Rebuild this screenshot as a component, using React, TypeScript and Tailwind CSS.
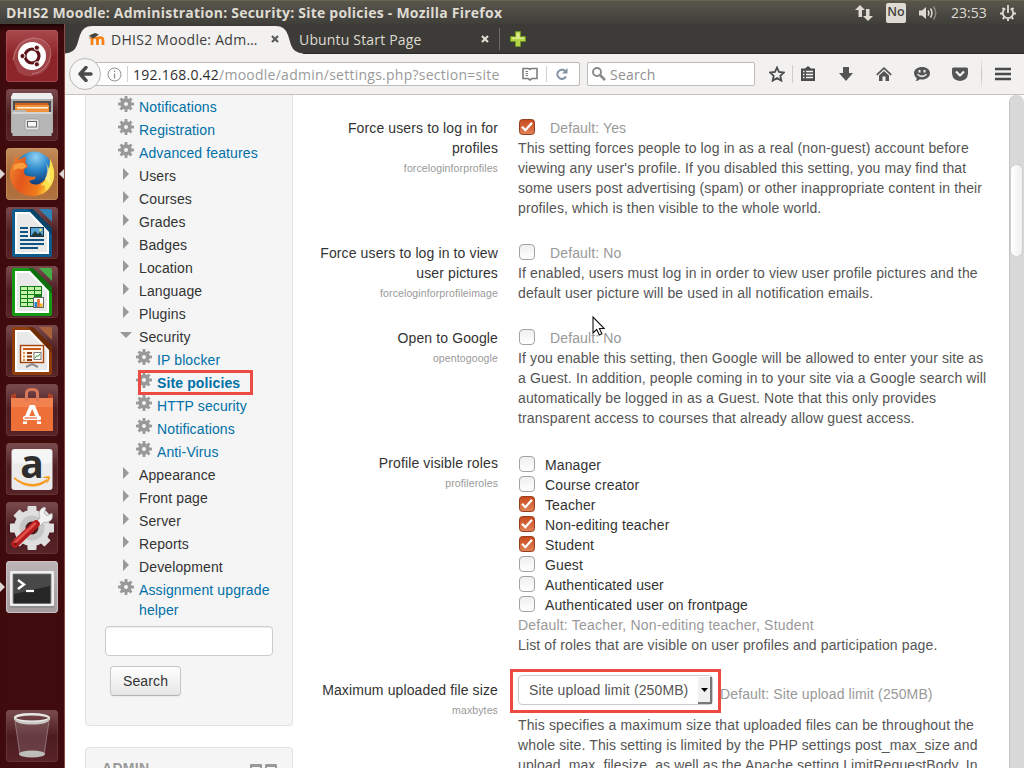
import React from 'react';

const UI = "font-['Open_Sans','Noto_Sans',sans-serif]";

function Cog() {
  return (
    <svg className="h-4 w-4" viewBox="0 0 16 16">
      <g fill="#999">
        <circle cx="8" cy="8" r="5.8" />
        <g>
          <rect x="6.6" y="0" width="2.8" height="16" />
          <rect x="0" y="6.6" width="16" height="2.8" />
          <rect x="6.6" y="0.2" width="2.8" height="15.6" transform="rotate(45 8 8)" />
          <rect x="6.6" y="0.2" width="2.8" height="15.6" transform="rotate(-45 8 8)" />
        </g>
      </g>
      <circle cx="8" cy="8" r="2" fill="#f5f5f5" />
    </svg>
  );
}

function TileBox({ tone, children }: { tone: string; children: React.ReactNode }) {
  return (
    <div className={`h-[52px] w-[52px] shrink-0 rounded-[4px] ${tone}`}>
      <svg viewBox="0 0 52 52" className="h-full w-full overflow-visible">{children}</svg>
    </div>
  );
}

const DARK = 'bg-linear-to-b from-[#7a4c50] via-[#4c1c20] to-[#572428] shadow-[inset_0_0_0_1px_#74454980]';

function DocShape({ c, d, l }: { c: string; d: string; l: string }) {
  return (
    <>
      <path d="M6 4q0-2 2-2H26L46 22V48q0 2-2 2H8q-2 0-2-2Z" fill={c} />
      <path d="M27 2L46 21V28L22 2Z" fill={d} />
      <path d="M9 5H24L43 25V47H9Z" fill="#fff" />
      <path d="M11 7H23L41 26V45H11Z" fill="#e9e9e9" />
      <path d="M33 2H44q2 0 2 2V15Z" fill={l} />
    </>
  );
}

function Launcher() {
  return (
    <div className="relative flex w-[65px] shrink-0 flex-col items-center gap-[7px] border-r border-[#8d4b45] bg-[#400b0d] pt-[6px] pr-0 shadow-[inset_0_8px_6px_-5px_#1c0304]">
      <TileBox tone="bg-linear-to-b from-[#a9494d] via-[#8c2329] to-[#8d262b] shadow-[inset_0_0_0_1px_#b5646680]">
        <path d="M7 30Q10 10 28 8Q44 9 45 24Q42 42 26 44" fill="none" stroke="#c88385" strokeWidth="1" opacity=".8" />
        <path d="M7 30Q8 9 27 7Q42 8 45 27Q44 38 36 43Q24 50 12 42Z" fill="#c4797b" opacity=".35" />
        <circle cx="26" cy="26" r="14" fill="#fff" />
        <circle cx="26" cy="26" r="7" fill="none" stroke="#5d1519" strokeWidth="3.2" />
        <circle cx="16.500" cy="26" r="2.6" fill="#5d1519" stroke="#fff" strokeWidth="1" />
        <circle cx="30.800" cy="17.700" r="2.6" fill="#5d1519" stroke="#fff" strokeWidth="1" />
        <circle cx="30.800" cy="34.300" r="2.6" fill="#5d1519" stroke="#fff" strokeWidth="1" />
      </TileBox>
      <TileBox tone={DARK}>
        <path d="M5 8L7 4H45L47 8V44H5Z" fill="#b0b0b0" />
        <path d="M5 8L7 4H45L47 8V10H5Z" fill="#ededed" />
        <rect x="7" y="12" width="38" height="12" fill="#4e4e4e" />
        <path d="M9 14H42V24H9Z" fill="#c9621f" />
        <path d="M9 16H43V24H9Z" fill="#f0913a" />
        <path d="M11 18H42V19.500H11Z" fill="#fff3df" />
        <path d="M6.500 21H19L21 23H45.500V47H6.500Z" fill="#b6b6b6" />
        <path d="M6.500 23H45.500V25H6.500Z" fill="#d4d4d4" />
        <rect x="19" y="30" width="14" height="11" rx="2" fill="#e2e2e2" stroke="#8e8e8e" strokeWidth=".6" />
        <rect x="21.500" y="32.500" width="9" height="5.500" fill="#f6f6f6" stroke="#666" />
      </TileBox>
      <TileBox tone="bg-linear-to-b from-[#c58d5b] via-[#ab6936] to-[#b17241] shadow-[inset_0_0_0_1px_#cf9d7180]">
        <defs>
          <radialGradient id="globe" cx=".55" cy=".15" r=".8"><stop offset="0" stopColor="#8fd3f5" /><stop offset=".45" stopColor="#2b86c8" /><stop offset="1" stopColor="#0b2f6b" /></radialGradient>
          <linearGradient id="fox" x1="0" y1="0" x2="1" y2=".3"><stop offset="0" stopColor="#f08a2c" /><stop offset=".4" stopColor="#e4561d" /><stop offset=".8" stopColor="#f07a1c" /><stop offset="1" stopColor="#fbc53a" /></linearGradient>
        </defs>
        <circle cx="28" cy="22" r="18.500" fill="url(#globe)" />
        <path d="M9 8.500L13 11.500Q17 9 20 9L19.500 14L22 18.500L18.500 21Q17 25 20 27.500Q24 29 29 28.500Q30.500 30 28 31.500L23 33Q26 38 33 36Q40 33 42 24L44 17Q49 24 47.500 31Q44 47 27 48Q8 47 4 30Q3 20 8.500 13.500Z" fill="url(#fox)" />
        <path d="M44 11Q50 22 47.500 32Q45 39 39 43Q40 38 38 37L34 38Q41 32 42 24Q44 19 44 11Z" fill="#fde24f" />
        <path d="M40 15Q43 22 39 31L45 36Q43 29 44 22Z" fill="#fff3a0" opacity=".7" />
        <path d="M8 17Q13 14 18 15L21 18.500L16 21.500Q12 19 7 23Z" fill="#f89c3c" />
      </TileBox>
      <TileBox tone={DARK}>
        <DocShape c="#0e5c8c" d="#0a4469" l="#2e83b4" />
        <path d="M14 21H22M14 25H22M14 29H22M14 33H38M14 37H38M14 41H32" stroke="#0e5584" strokeWidth="1.900" />
        <rect x="24.500" y="20.500" width="13" height="9" fill="#58a6d6" stroke="#18364b" />
        <path d="M25 29L29 24L32 27L34 25L37 29Z" fill="#223b3b" /><circle cx="34.500" cy="23" r="1.200" fill="#ffe45b" />
      </TileBox>
      <TileBox tone={DARK}>
        <DocShape c="#149a14" d="#0b6d0b" l="#47ad47" />
        <rect x="14" y="20" width="22" height="21" fill="#157d15" />
        <g fill="#c4f3ae">
          <path d="M15 21h6v3h-6zM22 21h6v3h-6zM29 21h6v3h-6zM15 25h6v3h-6zM22 25h6v3h-6zM29 25h6v3h-6zM15 29h6v3h-6zM22 29h6v3h-6zM15 33h6v3h-6zM22 33h6v3h-6zM15 37h6v3h-6zM22 37h6v3h-6z" />
        </g>
        <rect x="27.500" y="31.500" width="10" height="10" fill="#fff" stroke="#666" />
        <path d="M28.500 36h2.500v5h-2.500z" fill="#1c86c6" /><path d="M31.200 33h2.600v8h-2.600z" fill="#e4682c" /><path d="M34 37.500h2.600v3.500h-2.600z" fill="#f0b51d" />
      </TileBox>
      <TileBox tone={DARK}>
        <DocShape c="#8f3d0b" d="#6b2c05" l="#a8633b" />
        <rect x="14.500" y="20.500" width="23" height="17" fill="#fff6ec" stroke="#a3430d" strokeWidth="1.400" />
        <path d="M17 24H35" stroke="#cc5a1c" strokeWidth="2" />
        <path d="M17 28H19M17 31.500H19M17 35H19" stroke="#e98c50" strokeWidth="2" /><path d="M21 28H26M21 31.500H26M21 35H26" stroke="#8b3a0c" strokeWidth="2" />
        <rect x="28" y="27.500" width="7" height="7" fill="#fff" stroke="#777" /><path d="M29 33L31 30.500L32 31.500L34 29" stroke="#2a9a2f" fill="none" />
        <path d="M20 42L26 39L32 42" stroke="#8a8a8a" strokeWidth="2" fill="none" />
      </TileBox>
      <TileBox tone={DARK}>
        <path d="M5 11L10 9V14H42V9L47 11V16H5Z" fill="#ac4326" />
        <rect x="5" y="14" width="42" height="33" fill="#ee7039" />
        <rect x="5" y="14" width="42" height="9" fill="#f48f60" opacity=".55" />
        <path d="M20.500 17V9Q20.500 5.500 26 5.500Q31.500 5.500 31.500 9V17" fill="none" stroke="#d8765b" strokeWidth="3" />
        <path d="M19.500 36L25 23H27.500L33 36" fill="none" stroke="#fff" strokeWidth="3.800" />
        <rect x="17" y="32" width="18" height="4" rx="1.500" fill="#fff" /><path d="M18.500 34H31" stroke="#e96833" strokeWidth="1.200" />
        <path d="M17 37.500h4v2.500h-4zM31 37.500h4v2.500h-4z" fill="#fff" />
      </TileBox>
      <TileBox tone={DARK}>
        <rect x="5.500" y="6" width="41" height="41" rx="3" fill="#ebebeb" />
        <rect x="6.500" y="6.500" width="39" height="14" rx="3" fill="#fff" opacity=".5" />
        <text x="26" y="34.500" textAnchor="middle" fontSize="39" fontWeight="700" fill="#2e2e2e" fontFamily="Open Sans">a</text>
        <path d="M8 34Q25 47 41 36L42 38Q25 50 8 36Z" fill="#f79a1c" />
        <path d="M36 34.500Q41 32.500 44 33.500Q44 37 41 41Q41.500 38 42 35.500Q39 35 36 34.500Z" fill="#f79a1c" />
      </TileBox>
      <TileBox tone={DARK}>
        <g fill="#dfdfdf"><circle cx="26" cy="26" r="18" />
          <rect x="21.500" y="4" width="9" height="44" rx="1" /><rect x="4" y="21.500" width="44" height="9" rx="1" />
          <rect x="21.500" y="4" width="9" height="44" rx="1" transform="rotate(45 26 26)" /><rect x="21.500" y="4" width="9" height="44" rx="1" transform="rotate(-45 26 26)" /></g>
        <circle cx="26" cy="26" r="12.500" fill="#c6c6c6" /><circle cx="26" cy="26" r="6.500" fill="#4b1b1f" />
        <path d="M29 21L34 16Q31 8 38 5L40 6L38 11L41 14L46 11Q48 18 42 20Q39 21 38 20L33 25Z" fill="#f2f2f2" stroke="#999" strokeWidth=".6" />
        <path d="M9 42L30 22" stroke="#b61c1f" strokeWidth="7.500" strokeLinecap="round" />
        <path d="M9 40.500L29 21.500" stroke="#e4504b" strokeWidth="2.500" strokeLinecap="round" />
        <circle cx="9.500" cy="42" r="1.500" fill="#7b1414" />
      </TileBox>
      <TileBox tone="bg-linear-to-b from-[#bdb4b7] to-[#a39a9e] shadow-[inset_0_0_0_1px_#c9c1c4]">
        <rect x="4" y="10" width="44" height="37" rx="1" fill="#8d8d8d" />
        <rect x="4" y="10" width="44" height="35" rx="1" fill="#efefef" />
        <rect x="6.500" y="12.500" width="39" height="30" fill="#8f8f8f" />
        <rect x="7.500" y="13.500" width="37" height="29" fill="#262626" />
        <path d="M8 14H44V25L8 33Z" fill="#484848" />
        <path d="M12 19L18 23.500L12 28" fill="none" stroke="#fff" strokeWidth="2.400" /><path d="M20 30H28" stroke="#fff" strokeWidth="2.200" />
      </TileBox>
      <div className="mt-[90px]">
        <TileBox tone={DARK}>
          <path d="M9 10L14 46H38L43 10Z" fill="#a98f92" opacity=".28" />
          <path d="M9 11L14 45M43 11L38 45" stroke="#b7a3a5" strokeWidth=".8" opacity=".7" />
          <ellipse cx="26" cy="44" rx="13" ry="3.500" fill="#bdbdba" />
          <ellipse cx="26" cy="8" rx="17" ry="3.800" fill="none" stroke="#e6e6e3" strokeWidth="2.400" />
          <path d="M8 9Q10 14.500 26 14.500Q42 14.500 44 9V7Q42 12 26 12Q10 12 8 7Z" fill="#c8c8c4" />
        </TileBox>
      </div>
      <svg className="absolute top-[144px] left-0 h-3 w-[5px]" viewBox="0 0 5 12"><path d="M0 1L5 6L0 11Z" fill="#ddd4d4" /></svg>
      <svg className="absolute top-[144px] right-0 h-3 w-[5px]" viewBox="0 0 5 12"><path d="M5 1L0 6L5 11Z" fill="#ddd4d4" /></svg>
      <svg className="absolute top-[557px] left-0 h-3 w-[5px]" viewBox="0 0 5 12"><path d="M0 1L5 6L0 11Z" fill="#ddd4d4" /></svg>
    </div>
  );
}

function MenuBar() {
  return (
    <header className={`flex h-6 shrink-0 items-center border-t border-[#66634f] bg-linear-to-b from-[#59564d] to-[#3f3e39] pr-2 pl-[6px] ${UI}`}>
      <div className="text-[14px] leading-[22px] font-bold tracking-[0.23px] whitespace-nowrap text-[#dfdbd2]">DHIS2 Moodle: Administration: Security: Site policies - Mozilla Firefox</div>
      <div className="ml-auto flex items-center">
        <svg className="h-[18px] w-[18px]" viewBox="0 0 18 18" fill="#dfdbd2"><path d="M5 1L10 6H7V13H3.500V6H0ZM13 17L8 12H11V5H14.500V12H18Z" /></svg>
        <div className="ml-[13px] flex h-5 w-5 items-center justify-center rounded-[2px] bg-[#dfdbd2] text-[12.500px] font-semibold text-[#45433e]">No</div>
        <svg className="ml-[12px] h-[18px] w-5" viewBox="0 0 20 18" fill="none" stroke="#dfdbd2" strokeWidth="1.500"><path d="M1 6.500H4L8 3V15L4 11.500H1Z" fill="#dfdbd2" stroke="none" /><path d="M10 6.500Q11.800 9 10 11.500M12.500 4.500Q15.500 9 12.500 13.500" /><path d="M15.500 2.500Q20 9 15.500 15.500" stroke="#8b887f" /></svg>
        <div className="ml-[13px] w-[37px] text-[14px] leading-[22px] text-[#dfdbd2]">23:53</div>
        <svg className="ml-[12px] h-4 w-4" viewBox="0 0 16 16" fill="none" stroke="#dfdbd2"><path d="M5.300 3.500A5.200 5.200 0 1 0 10.700 3.500" strokeWidth="1.800" /><path d="M8 0V8" strokeWidth="1.800" /><path d="M0 8.500H2.500M13.500 8.500H16M8 14V16M2.500 3L4 4.500M13.500 3L12 4.500M2.800 14L4.200 12.400M13.200 14L11.800 12.400" strokeWidth="2" /></svg>
      </div>
    </header>
  );
}

function CloseX({ c }: { c: string }) {
  return <svg className="h-2 w-2" viewBox="0 0 8 8"><path d="M1 1L7 7M7 1L1 7" stroke={c} strokeWidth="2.200" /></svg>;
}

function Tabs() {
  return (
    <div className={`relative flex h-[30px] shrink-0 items-center border-b border-[#2b2a27] bg-[#3c3b37] pt-px text-[14px] ${UI}`}>
      <svg className="absolute top-0 left-0 h-[30px] w-[240px]" viewBox="0 0 240 30"><path d="M0 30V29.500Q9 29 12 21L15 11Q18 2 27 2H211Q220 2 223 11L226 21Q229 29 238 29.500V30Z" fill="#f2f1f0" /></svg>
      <div className="relative flex items-center pl-[24px]">
        <svg className="h-4 w-4" viewBox="0 0 16 16"><path d="M3 6V14M3 14V9Q3 6.500 5.700 6.500Q8.500 6.500 8.500 9.500V14M8.500 14V9.500Q8.500 6.500 11.300 6.500Q14 6.500 14 9.500V14" fill="none" stroke="#f98012" strokeWidth="2.700" /><path d="M0 4.500L6 2L10 3.500L4 7.500Z" fill="#444" /><path d="M1 5V8" stroke="#9a7c66" /></svg>
        <span className="ml-[6px] w-[153px] tracking-[0.27px] whitespace-nowrap text-[#3c3c3c]">DHIS2 Moodle: Adm…</span>
        <span className="ml-[7px]"><CloseX c="#5b5b5b" /></span>
      </div>
      <span className="relative ml-[20px] w-[140px] tracking-[0.17px] whitespace-nowrap text-[#dfdbd2]">Ubuntu Start Page</span>
      <span className="ml-[42px]"><CloseX c="#dfdbd2" /></span>
      <span className="ml-[10px] h-[22px] w-px bg-[#6c6b67]" />
      <svg className="ml-[10px] h-4 w-4" viewBox="0 0 16 16"><path d="M5.500 .5H10.500V5.500H15.500V10.500H10.500V15.500H5.500V10.500H.5V5.500H5.500Z" fill="#b4d445" stroke="#6c9423" /><path d="M6.500 2H9.500V6.500H14V8H2V6.500H6.500Z" fill="#dbe98b" /></svg>
    </div>
  );
}

function NavBar() {
  return (
    <div className={`flex h-[41px] shrink-0 items-center border-b border-[#c4c2bf] bg-[#f2f1f0] text-[14px] ${UI}`}>
      <div className="relative z-10 ml-1 flex h-8 w-8 shrink-0 items-center justify-center rounded-full border border-[#b9b7b4] bg-[#f8f7f7]">
        <svg className="h-4 w-4" viewBox="0 0 16 16"><path d="M9 1.500L3 8L9 14.500M3 8H14" fill="none" stroke="#4b4b4b" strokeWidth="3.400" strokeLinejoin="round" strokeLinecap="round" /></svg>
      </div>
      <div className="-ml-[6px] flex h-6 w-[485px] shrink-0 items-center rounded-r-[2px] border border-[#bdbbb8] bg-white">
        <svg className="ml-[11px] h-[15px] w-[15px]" viewBox="0 0 15 15"><circle cx="7.500" cy="7.500" r="6.500" fill="none" stroke="#8f8f8f" /><path d="M7.500 3.500V5M7.500 6.500V11.500" stroke="#8f8f8f" strokeWidth="1.300" /></svg>
        <span className="ml-[5px] h-4 w-px bg-[#d3d3d3]" />
        <div className="ml-[5px] w-[375px] overflow-hidden tracking-[0.25px] whitespace-nowrap text-[#9a9a9a]"><span className="text-[#2f2f2f]">192.168.0.42</span>/moodle/admin/settings.php?section=site</div>
        <svg className="ml-[14px] h-[14px] w-4" viewBox="0 0 16 14" fill="none" stroke="#7e7e7e" strokeWidth="1.600"><path d="M1 1.500H6Q8 1.500 8 3Q8 1.500 10 1.500H15V11.500H10L8 13L6 11.500H1Z" /><path d="M3.500 4.500H6M3.500 6.500H6M3.500 8.500H6" strokeWidth="1" /></svg>
        <span className="ml-2 h-4 w-px bg-[#d3d3d3]" />
        <svg className="ml-[9px] h-3 w-3" viewBox="0 0 12 12"><path d="M10 8.500A4.600 4.600 0 1 1 9 2.800" fill="none" stroke="#8392a5" strokeWidth="2" /><path d="M11.500 0V5.500H6Z" fill="#8392a5" /></svg>
      </div>
      <div className="ml-[7px] flex h-6 w-[168px] shrink-0 items-center rounded-[2px] border border-[#bdbbb8] bg-white">
        <svg className="ml-[4px] h-[14px] w-[14px]" viewBox="0 0 14 14"><circle cx="5" cy="5" r="4" fill="none" stroke="#8a8a8a" strokeWidth="1.900" /><path d="M8 8L13 13" stroke="#8a8a8a" strokeWidth="2.600" /></svg>
        <span className="ml-[4px] tracking-[0.2px] text-[#8f8f8f]">Search</span>
      </div>
      <svg className="ml-[14px] h-4 w-4" viewBox="0 0 16 16"><path d="M8 1.500L10 6L15 6.500L11.300 9.800L12.300 14.600L8 12.100L3.700 14.600L4.700 9.800L1 6.500L6 6Z" fill="none" stroke="#4c4c4c" strokeWidth="1.800" /></svg>
      <span className="ml-[7px] h-[18px] w-px bg-[#cfcdca]" />
      <svg className="ml-[7px] h-4 w-4" viewBox="0 0 16 16"><path d="M1 2.500H5L8 0L11 2.500H15V15H1Z" fill="#4c4c4c" /><path d="M3 5.500H4.500M6 5.500H13M3 8.500H4.500M6 8.500H13M3 11.500H4.500M6 11.500H13" stroke="#f2f1f0" strokeWidth="1.700" /></svg>
      <svg className="ml-[22px] h-4 w-4" viewBox="0 0 16 16"><path d="M5 1H11V7H15L8 15L1 7H5Z" fill="#545454" /></svg>
      <svg className="ml-[22px] h-4 w-4" viewBox="0 0 16 16" fill="#545454"><path d="M8 1L15.800 8.300L14.600 9.400L8 3.300L1.400 9.400L.2 8.300Z" /><path d="M3 9.500L8 5L13 9.500V15H9.500V10.500H6.500V15H3Z" /></svg>
      <svg className="ml-[22px] h-4 w-4" viewBox="0 0 16 16"><path d="M8 1C12.500 1 16 3.500 16 7.200S12.500 13.500 8 13.500Q6.800 13.500 6 13.300Q4 15.200 1.500 15Q3 13.800 2.600 12Q0 10 0 7.200C0 3.500 3.500 1 8 1Z" fill="#545454" /><path d="M5.500 4V6.500M10.500 4V6.500" stroke="#f2f1f0" strokeWidth="2" /><path d="M3.500 8.300Q8 12.500 12.500 8.300" fill="none" stroke="#f2f1f0" strokeWidth="1.500" /></svg>
      <svg className="ml-[22px] h-4 w-4" viewBox="0 0 16 16"><path d="M1.500 1.500H14.500Q16 1.500 16 3V7.500Q15.500 14.500 8 15Q.5 14.500 0 7.500V3Q0 1.500 1.500 1.500Z" fill="#545454" /><path d="M4 5.500L8 9.500L12 5.500" fill="none" stroke="#f2f1f0" strokeWidth="2.200" /></svg>
      <span className="ml-[13px] h-[34px] w-px bg-linear-to-b from-[#f2f1f0] via-[#c4c2bf] to-[#f2f1f0]" />
      <svg className="ml-[13px] h-[14px] w-4" viewBox="0 0 16 14"><path d="M0 2H16M0 7H16M0 12H16" stroke="#4a4a4a" strokeWidth="2.600" /></svg>
    </div>
  );
}

function Leaf({ children, indent, bold }: { children: React.ReactNode; indent?: boolean; bold?: boolean }) {
  return (
    <li className={`relative flex min-h-[23px] items-start pb-[3px] ${indent ? 'pl-[18px]' : ''}`}>
      <span className="-mt-px mr-[5px] shrink-0"><Cog /></span>
      <a className={`w-[136px] shrink-0 leading-5 text-[#0070a8] ${bold ? 'font-bold' : ''}`}>{children}</a>
      {bold && <span className="absolute -top-[3px] left-[20px] h-[25px] w-[115px] border-[3px] border-[#ec4a43]" />}
    </li>
  );
}

function Branch({ children, open }: { children: React.ReactNode; open?: boolean }) {
  return (
    <li className="flex h-[23px] items-start pb-[3px]">
      <svg className="mr-[5px] h-4 w-4 shrink-0" viewBox="0 0 16 16"><path d={open ? 'M2 5H14L8 11Z' : 'M5 2L11 8L5 14Z'} fill="#999" /></svg>
      <span className="leading-5">{children}</span>
    </li>
  );
}

function Sidebar() {
  return (
    <aside className="ml-5 w-[208px] shrink-0">
      <div className="h-[631px] rounded-b-[4px] border border-t-0 border-[#e3e3e3] bg-[#f5f5f5] pt-[2px] pl-[32px]">
        <ul className="text-[#333]">
          <Leaf>Notifications</Leaf>
          <Leaf>Registration</Leaf>
          <Leaf>Advanced features</Leaf>
          <Branch>Users</Branch>
          <Branch>Courses</Branch>
          <Branch>Grades</Branch>
          <Branch>Badges</Branch>
          <Branch>Location</Branch>
          <Branch>Language</Branch>
          <Branch>Plugins</Branch>
          <Branch open>Security</Branch>
          <Leaf indent>IP blocker</Leaf>
          <Leaf indent bold>Site policies</Leaf>
          <Leaf indent>HTTP security</Leaf>
          <Leaf indent>Notifications</Leaf>
          <Leaf indent>Anti-Virus</Leaf>
          <Branch>Appearance</Branch>
          <Branch>Front page</Branch>
          <Branch>Server</Branch>
          <Branch>Reports</Branch>
          <Branch>Development</Branch>
          <Leaf>Assignment upgrade<br />helper</Leaf>
        </ul>
        <div className="mt-[3px] -ml-[13px] h-[30px] w-[168px] rounded-[4px] border border-[#ccc] bg-white shadow-[inset_0_1px_1px_rgba(0,0,0,0.075)]" />
        <button className="mt-[10px] -ml-2 h-[30px] w-[71px] rounded-[4px] border border-[#c8c8c8] border-b-[#b3b3b3] bg-linear-to-b from-white to-[#e6e6e6] text-[#333] shadow-[0_1px_2px_rgba(0,0,0,0.05)]">Search</button>
      </div>
      <div className="mt-[21px] flex h-[60px] items-start rounded-t-[4px] border border-[#e3e3e3] bg-[#f5f5f5] pt-[10px] pl-[16px]">
        <h2 className="w-[49px] text-[14px] leading-5 font-bold tracking-[0.3px] text-[#999]">ADMIN</h2>
        <div className="mt-[6px] ml-[99px] flex gap-[3px]"><span className="h-3 w-3 rounded-[1px] border-2 border-t-[3px] border-[#999]" /><span className="h-3 w-3 rounded-[1px] border-2 border-t-[3px] border-[#999]" /></div>
      </div>
    </aside>
  );
}

function Check({ on }: { on?: boolean }) {
  return on ? (
    <svg className="h-4 w-4 shrink-0" viewBox="0 0 16 16"><defs><linearGradient id="chk" x1="0" y1="0" x2="0" y2="1"><stop offset="0" stopColor="#c8481c" /><stop offset="1" stopColor="#e38259" /></linearGradient></defs><rect x=".5" y=".5" width="15" height="15" rx="3" fill="url(#chk)" stroke="#94401f" /><path d="M3 7.800L6.400 11.200L13 3.800" fill="none" stroke="#fff" strokeWidth="2.300" /></svg>
  ) : (
    <span className="h-4 w-4 shrink-0 rounded-[4px] border border-[#a3a3a3] bg-linear-to-b from-[#efefef] to-white" />
  );
}

function Setting({ label, name, children, gap }: { label: React.ReactNode; name: string; children: React.ReactNode; gap: string }) {
  return (
    <div className={`flex whitespace-nowrap ${gap}`}>
      <div className="mr-5 w-[205px] shrink-0 text-right text-[#333]">
        <div>{label}</div>
        <div className="text-[10.500px] text-[#999]">{name}</div>
      </div>
      <div className="text-[#555]">{children}</div>
    </div>
  );
}

function DefaultRow({ on, text }: { on?: boolean; text: string }) {
  return <div className="flex h-5 items-start pt-px pl-px"><Check on={on} /><span className="-mt-px ml-[15px] leading-5 text-[#999]">{text}</span></div>;
}

const roles: [string, boolean][] = [
  ['Manager', false], ['Course creator', false], ['Teacher', true], ['Non-editing teacher', true],
  ['Student', true], ['Guest', false], ['Authenticated user', false], ['Authenticated user on frontpage', false],
];

function Settings() {
  return (
    <main className="min-w-0 flex-1 pt-[23px]">
      <Setting gap="mb-[25px]" label={<>Force users to log in for<br />profiles</>} name="forceloginforprofiles">
        <DefaultRow on text="Default: Yes" />
        <p>This setting forces people to log in as a real (non-guest) account before</p>
        <p>viewing any user's profile. If you disabled this setting, you may find that</p>
        <p>some users post advertising (spam) or other inappropriate content in their</p>
        <p>profiles, which is then visible to the whole world.</p>
      </Setting>
      <Setting gap="mb-[25px]" label={<>Force users to log in to view<br />user pictures</>} name="forceloginforprofileimage">
        <DefaultRow text="Default: No" />
        <p>If enabled, users must log in in order to view user profile pictures and the</p>
        <p>default user picture will be used in all notification emails.</p>
      </Setting>
      <Setting gap="mb-[25px]" label="Open to Google" name="opentogoogle">
        <DefaultRow text="Default: No" />
        <p>If you enable this setting, then Google will be allowed to enter your site as</p>
        <p>a Guest. In addition, people coming in to your site via a Google search will</p>
        <p>automatically be logged in as a Guest. Note that this only provides</p>
        <p>transparent access to courses that already allow guest access.</p>
      </Setting>
      <Setting gap="mb-[19px]" label="Profile visible roles" name="profileroles">
        <div className="pt-[2px] text-[#333]">
          {roles.map(([r, on]) => (
            <div key={r} className="flex h-5 items-start pt-px pl-px"><Check on={on} /><span className="-mt-px ml-[10px] leading-5">{r}</span></div>
          ))}
        </div>
        <p className="tracking-[0.21px] text-[#999]">Default: Teacher, Non-editing teacher, Student</p>
        <p>List of roles that are visible on user profiles and participation page.</p>
      </Setting>
      <div className="flex whitespace-nowrap">
        <div className="mr-5 w-[205px] shrink-0 pt-[6px] text-right text-[#333]">
          <div>Maximum uploaded file size</div>
          <div className="text-[10.500px] text-[#999]">maxbytes</div>
        </div>
        <div className="text-[#555]">
          <div className="relative flex h-[41px] items-start">
            <div className="mt-px flex h-[30px] w-[195px] items-center justify-between rounded-[4px] border border-[#ccc] bg-white pl-[10px]">
              <span>Site upload limit (250MB)</span>
              <span className="mt-px flex h-[27px] w-[14px] items-center justify-center border-r-2 border-b-2 border-[#777] bg-[#f0f0f0]"><svg className="h-1 w-[7px]" viewBox="0 0 7 4"><path d="M0 0H7L3.500 4Z" fill="#000" /></svg></span>
            </div>
            <span className="mt-[10px] ml-[7px] leading-5 text-[#999]">Default: Site upload limit (250MB)</span>
            <span className="absolute -top-[5px] -left-2 h-11 w-[211px] border-[3px] border-[#ec4a43]" />
          </div>
          <p>This specifies a maximum size that uploaded files can be throughout the</p>
          <p>whole site. This setting is limited by the PHP settings post_max_size and</p>
          <p>upload_max_filesize, as well as the Apache setting LimitRequestBody. In</p>
        </div>
      </div>
    </main>
  );
}

export default function App() {
  return (
    <div className="relative flex h-[768px] w-[1024px] flex-col overflow-hidden bg-white">
      <MenuBar />
      <div className="flex min-h-0 flex-1">
        <Launcher />
        <div className="flex min-w-0 flex-1 flex-col">
          <Tabs />
          <NavBar />
          <div className="flex min-h-0 flex-1 overflow-hidden bg-white font-['Liberation_Sans',Arial,sans-serif] text-[14px] leading-5 tracking-[0.12px]">
            <Sidebar />
            <Settings />
            <div className="w-[15px] shrink-0 rounded-t-[7px] border-l border-[#c4c4c4] bg-[#d8d8d8] pt-[69px]">
              <div className="h-[93px] w-[13px] rounded-[7px] border border-[#cfcfcf] bg-linear-to-r from-white to-[#f0f0f0]" />
            </div>
          </div>
        </div>
      </div>
      <svg className="absolute top-[316px] left-[592px] h-5 w-[13px]" viewBox="0 0 13 20"><path d="M1 1V17L4.700 13.500L7.300 19L9.900 17.800L7.400 12.500H12.300Z" fill="#fff" stroke="#111" strokeWidth="1.100" /></svg>
    </div>
  );
}
